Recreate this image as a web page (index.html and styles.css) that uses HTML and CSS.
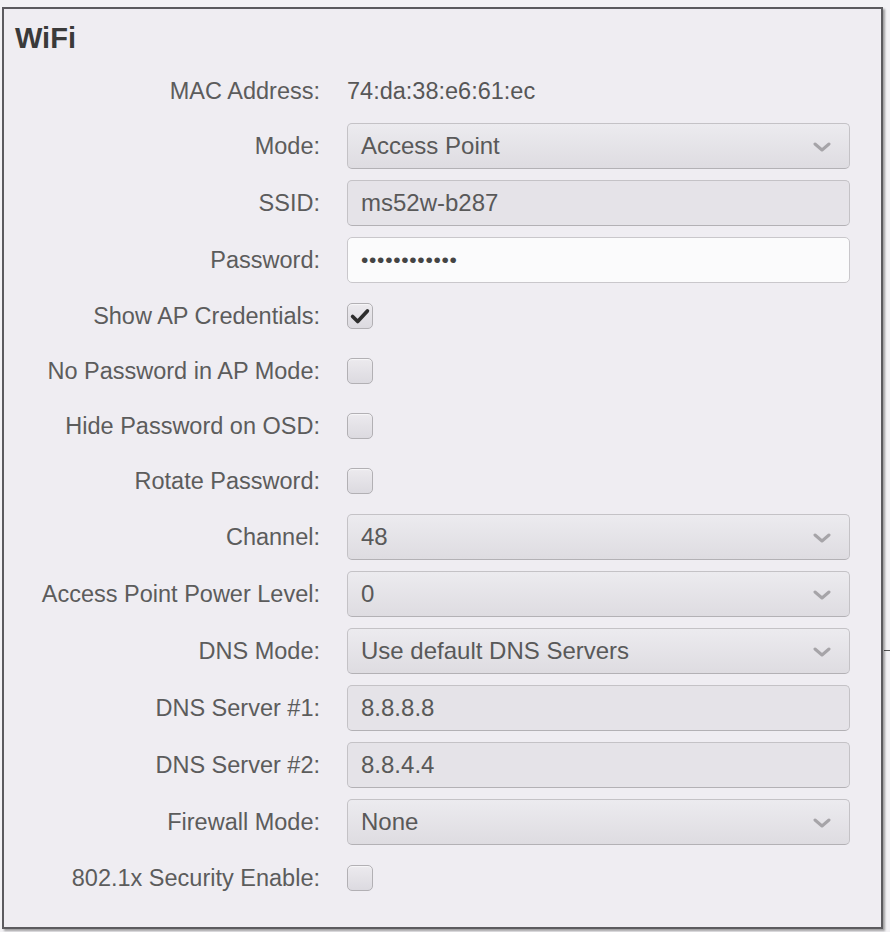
FILE: index.html
```html
<!DOCTYPE html>
<html lang="en">
<head>
<meta charset="utf-8">
<title>WiFi</title>
<link rel="stylesheet" href="styles.css">
</head>
<body>
<section class="panel">
  <h2 class="panel-title">WiFi</h2>
  <div class="form">
    <div class="label row-short">MAC Address:</div>
    <div class="value row-short">74:da:38:e6:61:ec</div>

    <div class="label">Mode:</div>
    <div class="select"><span>Access Point</span><svg class="chev" viewBox="0 0 18 10"><path d="M2 2 L9 8 L16 2"/></svg></div>

    <div class="label">SSID:</div>
    <div class="field disabled">ms52w-b287</div>

    <div class="label">Password:</div>
    <div class="field active"><span class="dots">••••••••••••</span></div>

    <div class="label row-check">Show AP Credentials:</div>
    <div class="row-check"><span class="check checked"><svg viewBox="0 0 26 26"><path d="M5 13.5 L10.5 19 L21 7.5"/></svg></span></div>

    <div class="label row-check">No Password in AP Mode:</div>
    <div class="row-check"><span class="check"></span></div>

    <div class="label row-check">Hide Password on OSD:</div>
    <div class="row-check"><span class="check"></span></div>

    <div class="label row-check">Rotate Password:</div>
    <div class="row-check"><span class="check"></span></div>

    <div class="label">Channel:</div>
    <div class="select"><span>48</span><svg class="chev" viewBox="0 0 18 10"><path d="M2 2 L9 8 L16 2"/></svg></div>

    <div class="label">Access Point Power Level:</div>
    <div class="select"><span>0</span><svg class="chev" viewBox="0 0 18 10"><path d="M2 2 L9 8 L16 2"/></svg></div>

    <div class="label">DNS Mode:</div>
    <div class="select"><span>Use default DNS Servers</span><svg class="chev" viewBox="0 0 18 10"><path d="M2 2 L9 8 L16 2"/></svg></div>

    <div class="label">DNS Server #1:</div>
    <div class="field disabled">8.8.8.8</div>

    <div class="label">DNS Server #2:</div>
    <div class="field disabled">8.8.4.4</div>

    <div class="label">Firewall Mode:</div>
    <div class="select"><span>None</span><svg class="chev" viewBox="0 0 18 10"><path d="M2 2 L9 8 L16 2"/></svg></div>

    <div class="label row-check">802.1x Security Enable:</div>
    <div class="row-check"><span class="check"></span></div>
  </div>
</section>
</body>
</html>
```

FILE: styles.css
```css
html, body {
  margin: 0;
  padding: 0;
}

body {
  background-color: #f3f2f5;
  /* rule of the page behind the dialog, peeking out on the right */
  background-image: linear-gradient(#555, #555);
  background-repeat: no-repeat;
  background-position: 884px 650px;
  background-size: 6px 1px;
  font-family: "Liberation Sans", Arial, sans-serif;
  color: #555;
  width: 890px;
  height: 932px;
  overflow: hidden;
}

.panel {
  box-sizing: border-box;
  width: 881px;
  margin: 7px 0 0 2px;
  background: #efedf2;
  border: 2px solid #5c5b5f;
  box-shadow: 2px 2px 2px rgba(0, 0, 0, 0.35);
  padding: 0 0 27px 0;
}

.panel-title {
  margin: 0;
  padding: 12px 0 0 11px;
  font-size: 29px;
  line-height: 34px;
  font-weight: bold;
  color: #3a3a3a;
}

.form {
  margin-top: 15px;
  display: grid;
  grid-template-columns: 316px 503px;
  column-gap: 27px;
  row-gap: 11px;
}

.label {
  display: flex;
  align-items: center;
  justify-content: flex-end;
  font-size: 23.5px;
  color: #5c5c5c;
  white-space: nowrap;
  height: 46px;
}

.row-short {
  height: 42px;
}

.row-check {
  height: 44px;
  display: flex;
  align-items: center;
}

.value {
  display: flex;
  align-items: center;
  font-size: 23.5px;
  color: #575757;
}

.select,
.field {
  position: relative;
  box-sizing: border-box;
  height: 46px;
  border: 1px solid #c4c2c6;
  border-bottom-color: #b3b1b5;
  border-radius: 5px;
  display: flex;
  align-items: center;
  padding-left: 13px;
  font-size: 24px;
  color: #595959;
}

.select {
  background: linear-gradient(#ecebef, #dedce1);
}

.field.disabled {
  background: #e5e3e8;
}

.field.active {
  background: #fbfbfc;
  border-color: #c9c7cb;
}

.dots {
  font-size: 21px;
  letter-spacing: 0.7px;
  color: #444;
}

.chev {
  position: absolute;
  right: 18px;
  top: 18px;
  width: 18px;
  height: 10px;
  fill: none;
  stroke: #a6a4a8;
  stroke-width: 3;
  stroke-linecap: round;
  stroke-linejoin: round;
}

.check {
  box-sizing: border-box;
  display: inline-block;
  width: 26px;
  height: 26px;
  border: 1px solid #b2b0b4;
  border-radius: 5px;
  background: linear-gradient(#eceaee, #dcdae0);
  box-shadow: inset 0 1px 1px rgba(255, 255, 255, 0.6);
}

.check svg {
  display: block;
  width: 24px;
  height: 24px;
  fill: none;
  stroke: #2e2e2e;
  stroke-width: 4;
  stroke-linecap: round;
  stroke-linejoin: round;
}
```
